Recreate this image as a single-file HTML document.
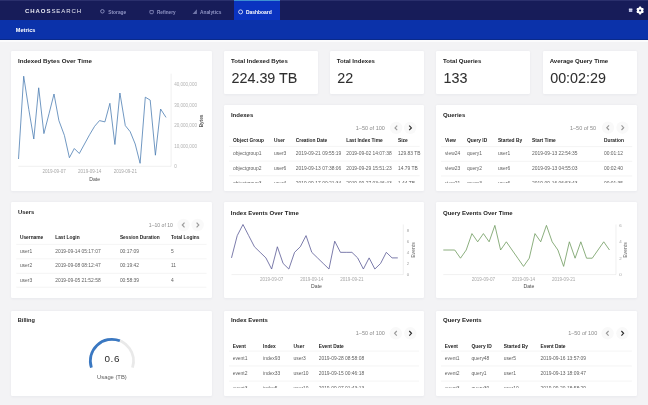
<!DOCTYPE html>
<html><head><meta charset="utf-8"><title>Dashboard</title>
<style>
html,body{margin:0;padding:0;width:648px;height:405px;overflow:hidden;background:#f3f3f5;font-family:"Liberation Sans", sans-serif;}
.t{position:absolute;white-space:nowrap;}
.r{position:absolute;}
.card{position:absolute;background:#fff;border-radius:1.2px;box-shadow:0 0.5px 2.5px rgba(40,50,90,0.05);}
svg{overflow:visible}
body{will-change:transform}
</style></head><body>
<div class="r" style="left:0.00px;top:0.00px;width:648.00px;height:20.00px;background:#171c59;"></div><div class="r" style="left:0.00px;top:0.00px;width:648.00px;height:0.80px;background:#2a2f6c;"></div><div class="r" style="left:0.00px;top:20.00px;width:648.00px;height:19.60px;background:#0b32aa;"></div><div class="r" style="left:0.00px;top:39.20px;width:648.00px;height:0.60px;background:#0a2a8a;"></div><div class="r" style="left:0.00px;top:39.80px;width:648.00px;height:2.40px;background:#fbfbfc;"></div><div class="t" style="left:25px;top:7.6px;font-size:6px;line-height:6px;letter-spacing:0.95px;color:#e8e9f3;font-weight:700">CHAOS<span style="font-weight:400">SEARCH</span></div><div class="r" style="left:234.00px;top:0.00px;width:46.00px;height:20.00px;background:#0a33c0;"></div><div class="r" style="left:234.00px;top:0.00px;width:46.00px;height:1.20px;background:#3d8fd2;"></div><div class="t" style="left:108.20px;top:10.65px;font-size:4.86px;line-height:4.86px;font-weight:700;color:#8f94c4;">Storage</div><div class="t" style="left:157.00px;top:10.75px;font-size:4.65px;line-height:4.65px;font-weight:700;color:#8f94c4;">Refinery</div><div class="t" style="left:200.00px;top:10.68px;font-size:4.80px;line-height:4.80px;font-weight:700;color:#8f94c4;">Analytics</div><div class="t" style="left:246.00px;top:10.60px;font-size:4.95px;line-height:4.95px;font-weight:700;color:#ffffff;">Dashboard</div><svg class="r" style="left:0;top:0" width="648" height="40" viewBox="0 0 648 40"><circle cx="102.4" cy="11.3" r="1.75" fill="none" stroke="#8f94c4" stroke-width="0.9"/><path d="M149.9 10.6 h3.4 v2.2 a0.9 0.9 0 0 1 -0.9 0.9 h-1.6 a0.9 0.9 0 0 1 -0.9 -0.9 z" fill="none" stroke="#8f94c4" stroke-width="0.8"/><path d="M192.6 13.9 L196.9 13.9 L196.9 9.3 Z" fill="#8f94c4" opacity="0.75"/><circle cx="240.6" cy="11.9" r="2" fill="none" stroke="#fff" stroke-width="0.75"/><rect x="628.9" y="8.7" width="3.4" height="3.3" fill="#b4b9df"/><rect x="628.9" y="8.7" width="3.4" height="1.2" fill="#d6d9f2"/><path d="M638.92 7.58 L639.35 6.62 L640.85 6.62 L641.28 7.58 L642.04 8.02 L643.08 7.91 L643.83 9.21 L643.22 10.06 L643.22 10.94 L643.83 11.79 L643.08 13.09 L642.04 12.98 L641.28 13.42 L640.85 14.38 L639.35 14.38 L638.92 13.42 L638.16 12.98 L637.12 13.09 L636.37 11.79 L636.98 10.94 L636.98 10.06 L636.37 9.21 L637.12 7.91 L638.16 8.02 Z" fill="#ffffff"/><circle cx="640.1" cy="10.5" r="1.05" fill="#171c59"/></svg><div class="t" style="left:15.80px;top:27.64px;font-size:5.60px;line-height:5.60px;font-weight:700;color:#ffffff;">Metrics</div><div class="card" style="left:11.30px;top:51.20px;width:201.00px;height:139.70px"></div><div class="card" style="left:223.90px;top:51.20px;width:94.30px;height:42.80px"></div><div class="card" style="left:329.50px;top:51.20px;width:94.50px;height:42.80px"></div><div class="card" style="left:435.90px;top:51.20px;width:94.10px;height:42.80px"></div><div class="card" style="left:542.50px;top:51.20px;width:94.40px;height:42.80px"></div><div class="card" style="left:223.90px;top:105.00px;width:200.10px;height:85.90px"></div><div class="card" style="left:435.90px;top:105.00px;width:201.00px;height:85.90px"></div><div class="card" style="left:11.30px;top:202.10px;width:201.00px;height:96.10px"></div><div class="card" style="left:223.90px;top:202.10px;width:200.10px;height:96.10px"></div><div class="card" style="left:435.90px;top:202.10px;width:201.00px;height:96.10px"></div><div class="card" style="left:11.30px;top:311.00px;width:201.00px;height:84.60px"></div><div class="card" style="left:223.90px;top:311.00px;width:200.10px;height:84.60px"></div><div class="card" style="left:435.90px;top:311.00px;width:201.00px;height:84.60px"></div><div class="t" style="left:18.00px;top:58.03px;font-size:6.20px;line-height:6.20px;font-weight:700;color:#1e1e1e;">Indexed Bytes Over Time</div><svg class="r" style="left:0;top:0" width="648" height="405"><line x1="18.3" y1="166.3" x2="171.1" y2="166.3" stroke="#e6e6e6" stroke-width="0.6"/><line x1="171.1" y1="73.7" x2="171.1" y2="166.3" stroke="#e6e6e6" stroke-width="0.6"/><polyline fill="none" stroke="#4d7db3" stroke-width="0.8" stroke-linejoin="round" points="18.5,159 23.7,76.2 28.8,109.5 33.8,139 38.7,87.8 43.9,133.6 49,113.8 54,94 58.9,120.6 64.4,135.4 69.4,157.7 74.3,148.5 79.3,153.5 84.5,144 89.6,134.7 94.6,126.3 99.5,120.6 104.9,121.9 109.9,103.3 114.9,144.5 119.9,93 125.3,125.6 130.2,131.7 135.2,144 140.1,163.3 145.3,97.2 150.2,100.1 155.4,155.2 160.6,109 166,117.4"/></svg><div class="t" style="left:174.20px;top:83.20px;font-size:4.55px;line-height:4.55px;font-weight:400;color:#b2b2b2;">40,000,000</div><div class="t" style="left:174.20px;top:103.70px;font-size:4.55px;line-height:4.55px;font-weight:400;color:#b2b2b2;">30,000,000</div><div class="t" style="left:174.20px;top:124.20px;font-size:4.55px;line-height:4.55px;font-weight:400;color:#b2b2b2;">20,000,000</div><div class="t" style="left:174.20px;top:144.70px;font-size:4.55px;line-height:4.55px;font-weight:400;color:#b2b2b2;">10,000,000</div><div class="t" style="left:174.20px;top:165.20px;font-size:4.55px;line-height:4.55px;font-weight:400;color:#b2b2b2;">0</div><div class="t" style="left:54.10px;top:170.30px;font-size:4.55px;line-height:4.55px;font-weight:400;color:#a8a8a8;transform:translateX(-50%);">2019-09-07</div><div class="t" style="left:89.70px;top:170.30px;font-size:4.55px;line-height:4.55px;font-weight:400;color:#a8a8a8;transform:translateX(-50%);">2019-09-14</div><div class="t" style="left:125.30px;top:170.30px;font-size:4.55px;line-height:4.55px;font-weight:400;color:#a8a8a8;transform:translateX(-50%);">2019-09-21</div><div class="t" style="left:94.70px;top:176.92px;font-size:5.10px;line-height:5.10px;font-weight:400;color:#4a4a4a;transform:translateX(-50%);">Date</div><div class="t" style="left:201.9px;top:120.6px;font-size:4.65px;line-height:4.65px;font-weight:700;color:#5a5a5a;transform:translate(-50%,-50%) rotate(-90deg)">Bytes</div><div class="t" style="left:231.10px;top:58.45px;font-size:6.06px;line-height:6.06px;font-weight:700;color:#1e1e1e;">Total Indexed Bytes</div><div class="t" style="left:231.60px;top:70.64px;font-size:14.30px;line-height:14.30px;font-weight:400;color:#2f2f2f;-webkit-text-stroke:0.05px #333;">224.39 TB</div><div class="t" style="left:336.70px;top:58.45px;font-size:6.06px;line-height:6.06px;font-weight:700;color:#1e1e1e;">Total Indexes</div><div class="t" style="left:337.20px;top:70.64px;font-size:14.30px;line-height:14.30px;font-weight:400;color:#2f2f2f;-webkit-text-stroke:0.05px #333;">22</div><div class="t" style="left:443.10px;top:58.45px;font-size:6.06px;line-height:6.06px;font-weight:700;color:#1e1e1e;">Total Queries</div><div class="t" style="left:443.60px;top:70.64px;font-size:14.30px;line-height:14.30px;font-weight:400;color:#2f2f2f;-webkit-text-stroke:0.05px #333;">133</div><div class="t" style="left:549.70px;top:58.45px;font-size:6.06px;line-height:6.06px;font-weight:700;color:#1e1e1e;">Average Query Time</div><div class="t" style="left:550.20px;top:70.64px;font-size:14.30px;line-height:14.30px;font-weight:400;color:#2f2f2f;-webkit-text-stroke:0.05px #333;">00:02:29</div><div class="t" style="left:230.90px;top:112.30px;font-size:6.00px;line-height:6.00px;font-weight:700;color:#1e1e1e;">Indexes</div><div class="t" style="left:355.80px;top:126.02px;font-size:5.50px;line-height:5.50px;font-weight:400;color:#8a8a8a;">1–50 of 100</div><svg class="r" style="left:0;top:0" width="648" height="405"><circle cx="396.2" cy="127.9" r="6.2" fill="#f9f9f9"/><path d="M397.20 125.60 L395.00 127.90 L397.20 130.20" fill="none" stroke="#999999" stroke-width="1.15"/><circle cx="410.2" cy="127.9" r="6.2" fill="#f9f9f9"/><path d="M409.20 125.60 L411.40 127.90 L409.20 130.20" fill="none" stroke="#2e2e2e" stroke-width="1.15"/></svg><div class="t" style="left:233.10px;top:138.85px;font-size:4.85px;line-height:4.85px;font-weight:700;color:#222;">Object Group</div><div class="t" style="left:274.00px;top:138.85px;font-size:4.85px;line-height:4.85px;font-weight:700;color:#222;">User</div><div class="t" style="left:295.80px;top:138.85px;font-size:4.85px;line-height:4.85px;font-weight:700;color:#222;">Creation Date</div><div class="t" style="left:346.20px;top:138.85px;font-size:4.85px;line-height:4.85px;font-weight:700;color:#222;">Last Index Time</div><div class="t" style="left:398.00px;top:138.85px;font-size:4.85px;line-height:4.85px;font-weight:700;color:#222;">Size</div><svg class="r" style="left:0;top:0" width="648" height="405"><line x1="229.0" y1="146.4" x2="419.6" y2="146.4" stroke="#ececec" stroke-width="0.6"/><line x1="229.0" y1="161.1" x2="419.6" y2="161.1" stroke="#ececec" stroke-width="0.6"/><line x1="229.0" y1="175.7" x2="419.6" y2="175.7" stroke="#ececec" stroke-width="0.6"/></svg><div class="r" style="left:0;top:0;width:648px;height:183.0px;overflow:hidden"><div class="t" style="left:233.10px;top:151.93px;font-size:4.90px;line-height:4.90px;font-weight:400;color:#5e5e5e;">objectgroup1</div><div class="t" style="left:274.00px;top:151.93px;font-size:4.90px;line-height:4.90px;font-weight:400;color:#5e5e5e;">user3</div><div class="t" style="left:295.80px;top:151.93px;font-size:4.90px;line-height:4.90px;font-weight:400;color:#5e5e5e;">2019-09-21 09:55:19</div><div class="t" style="left:346.20px;top:151.93px;font-size:4.90px;line-height:4.90px;font-weight:400;color:#5e5e5e;">2019-09-02 14:07:38</div><div class="t" style="left:398.00px;top:151.93px;font-size:4.90px;line-height:4.90px;font-weight:400;color:#5e5e5e;">129.83 TB</div><div class="t" style="left:233.10px;top:166.73px;font-size:4.90px;line-height:4.90px;font-weight:400;color:#5e5e5e;">objectgroup2</div><div class="t" style="left:274.00px;top:166.73px;font-size:4.90px;line-height:4.90px;font-weight:400;color:#5e5e5e;">user6</div><div class="t" style="left:295.80px;top:166.73px;font-size:4.90px;line-height:4.90px;font-weight:400;color:#5e5e5e;">2019-09-13 07:38:06</div><div class="t" style="left:346.20px;top:166.73px;font-size:4.90px;line-height:4.90px;font-weight:400;color:#5e5e5e;">2019-09-29 15:51:23</div><div class="t" style="left:398.00px;top:166.73px;font-size:4.90px;line-height:4.90px;font-weight:400;color:#5e5e5e;">14.79 TB</div><div class="t" style="left:233.10px;top:181.93px;font-size:4.90px;line-height:4.90px;font-weight:400;color:#5e5e5e;">objectgroup3</div><div class="t" style="left:274.00px;top:181.93px;font-size:4.90px;line-height:4.90px;font-weight:400;color:#5e5e5e;">user4</div><div class="t" style="left:295.80px;top:181.93px;font-size:4.90px;line-height:4.90px;font-weight:400;color:#5e5e5e;">2019-09-17 00:21:34</div><div class="t" style="left:346.20px;top:181.93px;font-size:4.90px;line-height:4.90px;font-weight:400;color:#5e5e5e;">2019-09-27 03:46:43</div><div class="t" style="left:398.00px;top:181.93px;font-size:4.90px;line-height:4.90px;font-weight:400;color:#5e5e5e;">1.44 TB</div></div><div class="t" style="left:442.90px;top:112.30px;font-size:6.00px;line-height:6.00px;font-weight:700;color:#1e1e1e;">Queries</div><div class="t" style="left:570.00px;top:125.82px;font-size:5.50px;line-height:5.50px;font-weight:400;color:#8a8a8a;">1–50 of 50</div><svg class="r" style="left:0;top:0" width="648" height="405"><circle cx="608.0" cy="127.7" r="6.2" fill="#f9f9f9"/><path d="M609.00 125.40 L606.80 127.70 L609.00 130.00" fill="none" stroke="#999999" stroke-width="1.15"/><circle cx="622.5" cy="127.7" r="6.2" fill="#f9f9f9"/><path d="M621.50 125.40 L623.70 127.70 L621.50 130.00" fill="none" stroke="#999999" stroke-width="1.15"/></svg><div class="t" style="left:444.90px;top:138.85px;font-size:4.85px;line-height:4.85px;font-weight:700;color:#222;">View</div><div class="t" style="left:467.00px;top:138.85px;font-size:4.85px;line-height:4.85px;font-weight:700;color:#222;">Query ID</div><div class="t" style="left:497.90px;top:138.85px;font-size:4.85px;line-height:4.85px;font-weight:700;color:#222;">Started By</div><div class="t" style="left:532.10px;top:138.85px;font-size:4.85px;line-height:4.85px;font-weight:700;color:#222;">Start Time</div><div class="t" style="left:604.00px;top:138.85px;font-size:4.85px;line-height:4.85px;font-weight:700;color:#222;">Duration</div><svg class="r" style="left:0;top:0" width="648" height="405"><line x1="441.0" y1="146.6" x2="632.2" y2="146.6" stroke="#ececec" stroke-width="0.6"/><line x1="441.0" y1="161.3" x2="632.2" y2="161.3" stroke="#ececec" stroke-width="0.6"/><line x1="441.0" y1="176.0" x2="632.2" y2="176.0" stroke="#ececec" stroke-width="0.6"/></svg><div class="r" style="left:0;top:0;width:648px;height:183.0px;overflow:hidden"><div class="t" style="left:444.90px;top:151.93px;font-size:4.90px;line-height:4.90px;font-weight:400;color:#5e5e5e;">view24</div><div class="t" style="left:467.00px;top:151.93px;font-size:4.90px;line-height:4.90px;font-weight:400;color:#5e5e5e;">query1</div><div class="t" style="left:497.90px;top:151.93px;font-size:4.90px;line-height:4.90px;font-weight:400;color:#5e5e5e;">user1</div><div class="t" style="left:532.10px;top:151.93px;font-size:4.90px;line-height:4.90px;font-weight:400;color:#5e5e5e;">2019-09-13 22:54:35</div><div class="t" style="left:604.00px;top:151.93px;font-size:4.90px;line-height:4.90px;font-weight:400;color:#5e5e5e;">00:01:12</div><div class="t" style="left:444.90px;top:166.73px;font-size:4.90px;line-height:4.90px;font-weight:400;color:#5e5e5e;">view23</div><div class="t" style="left:467.00px;top:166.73px;font-size:4.90px;line-height:4.90px;font-weight:400;color:#5e5e5e;">query2</div><div class="t" style="left:497.90px;top:166.73px;font-size:4.90px;line-height:4.90px;font-weight:400;color:#5e5e5e;">user6</div><div class="t" style="left:532.10px;top:166.73px;font-size:4.90px;line-height:4.90px;font-weight:400;color:#5e5e5e;">2019-09-13 04:55:03</div><div class="t" style="left:604.00px;top:166.73px;font-size:4.90px;line-height:4.90px;font-weight:400;color:#5e5e5e;">00:02:40</div><div class="t" style="left:444.90px;top:181.93px;font-size:4.90px;line-height:4.90px;font-weight:400;color:#5e5e5e;">view21</div><div class="t" style="left:467.00px;top:181.93px;font-size:4.90px;line-height:4.90px;font-weight:400;color:#5e5e5e;">query3</div><div class="t" style="left:497.90px;top:181.93px;font-size:4.90px;line-height:4.90px;font-weight:400;color:#5e5e5e;">user6</div><div class="t" style="left:532.10px;top:181.93px;font-size:4.90px;line-height:4.90px;font-weight:400;color:#5e5e5e;">2019-09-16 06:53:43</div><div class="t" style="left:604.00px;top:181.93px;font-size:4.90px;line-height:4.90px;font-weight:400;color:#5e5e5e;">00:01:35</div></div><div class="t" style="left:18.10px;top:209.87px;font-size:5.80px;line-height:5.80px;font-weight:700;color:#1e1e1e;">Users</div><div class="t" style="left:148.80px;top:223.32px;font-size:5.10px;line-height:5.10px;font-weight:400;color:#8a8a8a;">1–10 of 10</div><svg class="r" style="left:0;top:0" width="648" height="405"><circle cx="183.5" cy="225.0" r="6.2" fill="#f9f9f9"/><path d="M184.50 222.70 L182.30 225.00 L184.50 227.30" fill="none" stroke="#999999" stroke-width="1.15"/><circle cx="197.6" cy="225.0" r="6.2" fill="#f9f9f9"/><path d="M196.60 222.70 L198.80 225.00 L196.60 227.30" fill="none" stroke="#999999" stroke-width="1.15"/></svg><div class="t" style="left:19.90px;top:236.25px;font-size:4.85px;line-height:4.85px;font-weight:700;color:#222;">Username</div><div class="t" style="left:55.20px;top:236.25px;font-size:4.85px;line-height:4.85px;font-weight:700;color:#222;">Last Login</div><div class="t" style="left:119.90px;top:236.25px;font-size:4.85px;line-height:4.85px;font-weight:700;color:#222;">Session Duration</div><div class="t" style="left:171.00px;top:236.25px;font-size:4.85px;line-height:4.85px;font-weight:700;color:#222;">Total Logins</div><svg class="r" style="left:0;top:0" width="648" height="405"><line x1="16.3" y1="244.4" x2="206.5" y2="244.4" stroke="#ececec" stroke-width="0.6"/><line x1="16.3" y1="258.8" x2="206.5" y2="258.8" stroke="#ececec" stroke-width="0.6"/><line x1="16.3" y1="273.3" x2="206.5" y2="273.3" stroke="#ececec" stroke-width="0.6"/><line x1="16.3" y1="287.2" x2="206.5" y2="287.2" stroke="#ececec" stroke-width="0.6"/></svg><div class="r" style="left:0;top:0;width:648px;height:405px;overflow:hidden"><div class="t" style="left:19.90px;top:249.53px;font-size:4.90px;line-height:4.90px;font-weight:400;color:#5e5e5e;">user1</div><div class="t" style="left:55.20px;top:249.53px;font-size:4.90px;line-height:4.90px;font-weight:400;color:#5e5e5e;">2019-09-14 05:17:07</div><div class="t" style="left:119.90px;top:249.53px;font-size:4.90px;line-height:4.90px;font-weight:400;color:#5e5e5e;">00:17:09</div><div class="t" style="left:171.00px;top:249.53px;font-size:4.90px;line-height:4.90px;font-weight:400;color:#5e5e5e;">5</div><div class="t" style="left:19.90px;top:263.83px;font-size:4.90px;line-height:4.90px;font-weight:400;color:#5e5e5e;">user2</div><div class="t" style="left:55.20px;top:263.83px;font-size:4.90px;line-height:4.90px;font-weight:400;color:#5e5e5e;">2019-09-08 08:12:47</div><div class="t" style="left:119.90px;top:263.83px;font-size:4.90px;line-height:4.90px;font-weight:400;color:#5e5e5e;">00:19:42</div><div class="t" style="left:171.00px;top:263.83px;font-size:4.90px;line-height:4.90px;font-weight:400;color:#5e5e5e;">11</div><div class="t" style="left:19.90px;top:278.63px;font-size:4.90px;line-height:4.90px;font-weight:400;color:#5e5e5e;">user3</div><div class="t" style="left:55.20px;top:278.63px;font-size:4.90px;line-height:4.90px;font-weight:400;color:#5e5e5e;">2019-09-05 21:52:58</div><div class="t" style="left:119.90px;top:278.63px;font-size:4.90px;line-height:4.90px;font-weight:400;color:#5e5e5e;">00:58:39</div><div class="t" style="left:171.00px;top:278.63px;font-size:4.90px;line-height:4.90px;font-weight:400;color:#5e5e5e;">4</div></div><div class="t" style="left:230.90px;top:317.30px;font-size:6.00px;line-height:6.00px;font-weight:700;color:#1e1e1e;">Index Events</div><div class="t" style="left:355.80px;top:331.42px;font-size:5.50px;line-height:5.50px;font-weight:400;color:#8a8a8a;">1–50 of 100</div><svg class="r" style="left:0;top:0" width="648" height="405"><circle cx="395.8" cy="333.3" r="6.2" fill="#f9f9f9"/><path d="M396.80 331.00 L394.60 333.30 L396.80 335.60" fill="none" stroke="#999999" stroke-width="1.15"/><circle cx="410.3" cy="333.3" r="6.2" fill="#f9f9f9"/><path d="M409.30 331.00 L411.50 333.30 L409.30 335.60" fill="none" stroke="#2e2e2e" stroke-width="1.15"/></svg><div class="t" style="left:232.70px;top:344.55px;font-size:4.85px;line-height:4.85px;font-weight:700;color:#222;">Event</div><div class="t" style="left:263.10px;top:344.55px;font-size:4.85px;line-height:4.85px;font-weight:700;color:#222;">Index</div><div class="t" style="left:293.60px;top:344.55px;font-size:4.85px;line-height:4.85px;font-weight:700;color:#222;">User</div><div class="t" style="left:318.70px;top:344.55px;font-size:4.85px;line-height:4.85px;font-weight:700;color:#222;">Event Date</div><svg class="r" style="left:0;top:0" width="648" height="405"><line x1="229.0" y1="351.1" x2="419.0" y2="351.1" stroke="#ececec" stroke-width="0.6"/><line x1="229.0" y1="366" x2="419.0" y2="366" stroke="#ececec" stroke-width="0.6"/><line x1="229.0" y1="381.1" x2="419.0" y2="381.1" stroke="#ececec" stroke-width="0.6"/></svg><div class="r" style="left:0;top:0;width:648px;height:388.4px;overflow:hidden"><div class="t" style="left:232.70px;top:357.33px;font-size:4.90px;line-height:4.90px;font-weight:400;color:#5e5e5e;">event1</div><div class="t" style="left:263.10px;top:357.33px;font-size:4.90px;line-height:4.90px;font-weight:400;color:#5e5e5e;">index93</div><div class="t" style="left:293.60px;top:357.33px;font-size:4.90px;line-height:4.90px;font-weight:400;color:#5e5e5e;">user3</div><div class="t" style="left:318.70px;top:357.33px;font-size:4.90px;line-height:4.90px;font-weight:400;color:#5e5e5e;">2019-09-28 08:58:08</div><div class="t" style="left:232.70px;top:372.23px;font-size:4.90px;line-height:4.90px;font-weight:400;color:#5e5e5e;">event2</div><div class="t" style="left:263.10px;top:372.23px;font-size:4.90px;line-height:4.90px;font-weight:400;color:#5e5e5e;">index33</div><div class="t" style="left:293.60px;top:372.23px;font-size:4.90px;line-height:4.90px;font-weight:400;color:#5e5e5e;">user10</div><div class="t" style="left:318.70px;top:372.23px;font-size:4.90px;line-height:4.90px;font-weight:400;color:#5e5e5e;">2019-09-15 00:46:18</div><div class="t" style="left:232.70px;top:386.63px;font-size:4.90px;line-height:4.90px;font-weight:400;color:#5e5e5e;">event3</div><div class="t" style="left:263.10px;top:386.63px;font-size:4.90px;line-height:4.90px;font-weight:400;color:#5e5e5e;">index5</div><div class="t" style="left:293.60px;top:386.63px;font-size:4.90px;line-height:4.90px;font-weight:400;color:#5e5e5e;">user10</div><div class="t" style="left:318.70px;top:386.63px;font-size:4.90px;line-height:4.90px;font-weight:400;color:#5e5e5e;">2019-09-07 01:43:13</div></div><div class="t" style="left:443.00px;top:317.30px;font-size:6.00px;line-height:6.00px;font-weight:700;color:#1e1e1e;">Query Events</div><div class="t" style="left:568.20px;top:331.42px;font-size:5.50px;line-height:5.50px;font-weight:400;color:#8a8a8a;">1–50 of 100</div><svg class="r" style="left:0;top:0" width="648" height="405"><circle cx="607.6" cy="333.3" r="6.2" fill="#f9f9f9"/><path d="M608.60 331.00 L606.40 333.30 L608.60 335.60" fill="none" stroke="#999999" stroke-width="1.15"/><circle cx="622.4" cy="333.3" r="6.2" fill="#f9f9f9"/><path d="M621.40 331.00 L623.60 333.30 L621.40 335.60" fill="none" stroke="#2e2e2e" stroke-width="1.15"/></svg><div class="t" style="left:444.80px;top:344.55px;font-size:4.85px;line-height:4.85px;font-weight:700;color:#222;">Event</div><div class="t" style="left:471.60px;top:344.55px;font-size:4.85px;line-height:4.85px;font-weight:700;color:#222;">Query ID</div><div class="t" style="left:503.70px;top:344.55px;font-size:4.85px;line-height:4.85px;font-weight:700;color:#222;">Started By</div><div class="t" style="left:540.50px;top:344.55px;font-size:4.85px;line-height:4.85px;font-weight:700;color:#222;">Event Date</div><svg class="r" style="left:0;top:0" width="648" height="405"><line x1="441.0" y1="351.1" x2="631.8" y2="351.1" stroke="#ececec" stroke-width="0.6"/><line x1="441.0" y1="366" x2="631.8" y2="366" stroke="#ececec" stroke-width="0.6"/><line x1="441.0" y1="381.1" x2="631.8" y2="381.1" stroke="#ececec" stroke-width="0.6"/></svg><div class="r" style="left:0;top:0;width:648px;height:388.4px;overflow:hidden"><div class="t" style="left:444.80px;top:357.33px;font-size:4.90px;line-height:4.90px;font-weight:400;color:#5e5e5e;">event1</div><div class="t" style="left:471.60px;top:357.33px;font-size:4.90px;line-height:4.90px;font-weight:400;color:#5e5e5e;">query48</div><div class="t" style="left:503.70px;top:357.33px;font-size:4.90px;line-height:4.90px;font-weight:400;color:#5e5e5e;">user5</div><div class="t" style="left:540.50px;top:357.33px;font-size:4.90px;line-height:4.90px;font-weight:400;color:#5e5e5e;">2019-09-16 13:57:09</div><div class="t" style="left:444.80px;top:372.23px;font-size:4.90px;line-height:4.90px;font-weight:400;color:#5e5e5e;">event2</div><div class="t" style="left:471.60px;top:372.23px;font-size:4.90px;line-height:4.90px;font-weight:400;color:#5e5e5e;">query1</div><div class="t" style="left:503.70px;top:372.23px;font-size:4.90px;line-height:4.90px;font-weight:400;color:#5e5e5e;">user1</div><div class="t" style="left:540.50px;top:372.23px;font-size:4.90px;line-height:4.90px;font-weight:400;color:#5e5e5e;">2019-09-13 18:09:47</div><div class="t" style="left:444.80px;top:386.63px;font-size:4.90px;line-height:4.90px;font-weight:400;color:#5e5e5e;">event3</div><div class="t" style="left:471.60px;top:386.63px;font-size:4.90px;line-height:4.90px;font-weight:400;color:#5e5e5e;">query30</div><div class="t" style="left:503.70px;top:386.63px;font-size:4.90px;line-height:4.90px;font-weight:400;color:#5e5e5e;">user10</div><div class="t" style="left:540.50px;top:386.63px;font-size:4.90px;line-height:4.90px;font-weight:400;color:#5e5e5e;">2019-09-20 18:58:29</div></div><div class="t" style="left:230.80px;top:210.00px;font-size:6.00px;line-height:6.00px;font-weight:700;color:#1e1e1e;">Index Events Over Time</div><svg class="r" style="left:0;top:0" width="648" height="405"><line x1="231.5" y1="274.6" x2="403.3" y2="274.6" stroke="#e6e6e6" stroke-width="0.6"/><line x1="403.3" y1="224.5" x2="403.3" y2="274.6" stroke="#e6e6e6" stroke-width="0.6"/><polyline fill="none" stroke="#5b5b95" stroke-width="0.8" stroke-linejoin="round" points="231.50,257.90 237.23,235.63 242.97,224.50 248.70,235.63 254.44,246.77 260.17,252.33 265.90,257.90 271.64,269.03 277.37,246.77 283.11,263.47 288.84,269.03 294.57,252.33 300.31,246.77 306.04,235.63 311.78,252.33 317.51,257.90 323.24,263.47 328.98,269.03 334.71,241.20 340.45,252.33 346.18,252.33 351.91,252.33 357.65,257.90 363.38,269.03 369.12,257.90 374.85,269.03 380.58,263.47 386.32,252.33 392.05,257.90 397.79,257.90"/></svg><div class="t" style="left:406.80px;top:273.28px;font-size:4.40px;line-height:4.40px;font-weight:400;color:#a2a2a2;">0</div><div class="t" style="left:406.80px;top:262.14px;font-size:4.40px;line-height:4.40px;font-weight:400;color:#a2a2a2;">2</div><div class="t" style="left:406.80px;top:251.01px;font-size:4.40px;line-height:4.40px;font-weight:400;color:#a2a2a2;">4</div><div class="t" style="left:406.80px;top:239.88px;font-size:4.40px;line-height:4.40px;font-weight:400;color:#a2a2a2;">6</div><div class="t" style="left:406.80px;top:228.74px;font-size:4.40px;line-height:4.40px;font-weight:400;color:#a2a2a2;">8</div><div class="t" style="left:271.64px;top:277.60px;font-size:4.55px;line-height:4.55px;font-weight:400;color:#a8a8a8;transform:translateX(-50%);">2019-09-07</div><div class="t" style="left:311.78px;top:277.60px;font-size:4.55px;line-height:4.55px;font-weight:400;color:#a8a8a8;transform:translateX(-50%);">2019-09-14</div><div class="t" style="left:351.91px;top:277.60px;font-size:4.55px;line-height:4.55px;font-weight:400;color:#a8a8a8;transform:translateX(-50%);">2019-09-21</div><div class="t" style="left:316.50px;top:284.22px;font-size:5.10px;line-height:5.10px;font-weight:400;color:#4a4a4a;transform:translateX(-50%);">Date</div><div class="t" style="left:413.7px;top:249.8px;font-size:5.1px;line-height:5.1px;font-weight:400;color:#5a5a5a;transform:translate(-50%,-50%) rotate(-90deg)">Events</div><div class="t" style="left:443.00px;top:210.00px;font-size:6.00px;line-height:6.00px;font-weight:700;color:#1e1e1e;">Query Events Over Time</div><svg class="r" style="left:0;top:0" width="648" height="405"><line x1="443.3" y1="274.6" x2="616" y2="274.6" stroke="#e6e6e6" stroke-width="0.6"/><line x1="616" y1="224.5" x2="616" y2="274.6" stroke="#e6e6e6" stroke-width="0.6"/><polyline fill="none" stroke="#6f9a5e" stroke-width="0.8" stroke-linejoin="round" points="443.30,250.00 449.03,250.00 454.76,250.00 460.49,258.20 466.22,250.00 471.95,233.60 477.68,241.80 483.41,233.60 489.14,241.80 494.87,225.40 500.60,250.00 506.33,241.80 512.06,250.00 517.79,258.20 523.52,266.40 529.25,258.20 534.98,233.60 540.71,241.80 546.44,225.40 552.17,241.80 557.90,250.00 563.63,266.40 569.36,241.80 575.09,258.20 580.82,241.80 586.55,258.20 592.28,258.20 598.01,250.00 603.74,241.80 609.47,250.00"/></svg><div class="t" style="left:619.30px;top:273.28px;font-size:4.40px;line-height:4.40px;font-weight:400;color:#a2a2a2;">0</div><div class="t" style="left:619.30px;top:256.88px;font-size:4.40px;line-height:4.40px;font-weight:400;color:#a2a2a2;">2</div><div class="t" style="left:619.30px;top:240.48px;font-size:4.40px;line-height:4.40px;font-weight:400;color:#a2a2a2;">4</div><div class="t" style="left:619.30px;top:224.08px;font-size:4.40px;line-height:4.40px;font-weight:400;color:#a2a2a2;">6</div><div class="t" style="left:483.41px;top:277.60px;font-size:4.55px;line-height:4.55px;font-weight:400;color:#a8a8a8;transform:translateX(-50%);">2019-09-07</div><div class="t" style="left:523.52px;top:277.60px;font-size:4.55px;line-height:4.55px;font-weight:400;color:#a8a8a8;transform:translateX(-50%);">2019-09-14</div><div class="t" style="left:563.63px;top:277.60px;font-size:4.55px;line-height:4.55px;font-weight:400;color:#a8a8a8;transform:translateX(-50%);">2019-09-21</div><div class="t" style="left:528.90px;top:284.22px;font-size:5.10px;line-height:5.10px;font-weight:400;color:#4a4a4a;transform:translateX(-50%);">Date</div><div class="t" style="left:626px;top:249.8px;font-size:5.1px;line-height:5.1px;font-weight:400;color:#5a5a5a;transform:translate(-50%,-50%) rotate(-90deg)">Events</div><div class="t" style="left:17.80px;top:317.64px;font-size:5.60px;line-height:5.60px;font-weight:700;color:#1e1e1e;">Billing</div><svg class="r" style="left:0;top:0" width="648" height="405"><path d="M91.36 367.57 A21.6 21.6 0 1 1 132.44 367.57" fill="none" stroke="#e9e9e9" stroke-width="2.7"/><path d="M91.36 367.57 A21.6 21.6 0 0 1 119.85 340.82" fill="none" stroke="#3a78c2" stroke-width="2.7"/></svg><div class="t" style="left:112.25px;top:354.19px;font-size:9.90px;line-height:9.90px;font-weight:400;color:#2a2a2a;letter-spacing:0.6px;transform:translateX(-50%);">0.6</div><div class="t" style="left:111.90px;top:374.77px;font-size:5.80px;line-height:5.80px;font-weight:400;color:#5c5c5c;transform:translateX(-50%);">Usage (TB)</div>
</body></html>
